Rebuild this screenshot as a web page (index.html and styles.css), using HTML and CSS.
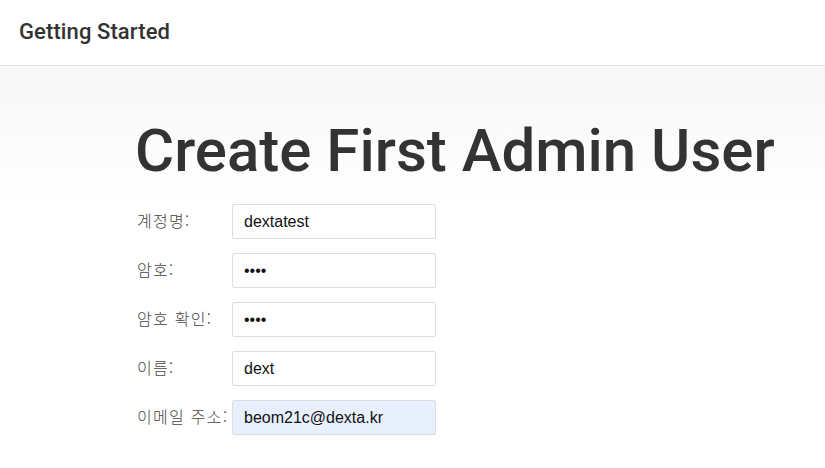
FILE: index.html
```html
<!DOCTYPE html>
<html lang="ko">
<head>
<meta charset="utf-8">
<title>Getting Started</title>
<link rel="stylesheet" href="styles.css">
</head>
<body>
<header class="top">
  <div class="brand">Getting Started</div>
</header>
<main class="page">
  <h1 class="title">Create First Admin User</h1>
  <form class="form">
    <label class="lbl" for="u">계정명:</label>
    <input class="field" id="u" type="text" value="dextatest">
    <label class="lbl" for="p">암호:</label>
    <input class="field pw" id="p" type="password" value="test">
    <label class="lbl" for="p2">암호 확인:</label>
    <input class="field pw" id="p2" type="password" value="test">
    <label class="lbl" for="n">이름:</label>
    <input class="field" id="n" type="text" value="dext">
    <label class="lbl" for="e">이메일 주소:</label>
    <input class="field auto" id="e" type="text" value="beom21c@dexta.kr">
  </form>
</main>
</body>
</html>
```

FILE: styles.css
```css
html, body {
  margin: 0;
  padding: 0;
  height: 100%;
  overflow: hidden;
}
body {
  font-family: Roboto, "Liberation Sans", Arial, sans-serif;
  color: #333;
  background: #fff;
}
.top {
  height: 65px;
  border-bottom: 1px solid #e2e2e2;
  display: flex;
  align-items: center;
  padding-left: 19px;
}
.brand {
  font-size: 22px;
  font-weight: 500;
  letter-spacing: 0.1px;
  color: #333;
  margin-top: -3px;
}
.page {
  background: linear-gradient(to bottom, #f7f7f7 0px, #ffffff 140px);
  padding: 45px 0 0 135px;
  height: calc(100% - 66px);
  box-sizing: border-box;
}
.title {
  margin: 0;
  font-family: Roboto, sans-serif;
  font-weight: 500;
  font-size: 60px;
  line-height: 80px;
  color: #333;
}
.form {
  display: grid;
  grid-template-columns: 97px 204px;
  row-gap: 14px;
  margin-top: 13px;
}
.lbl {
  font-family: "Noto Sans CJK KR", sans-serif;
  font-size: 16px;
  font-weight: 300;
  color: #444;
  padding-top: 5px;
  padding-left: 2px;
  letter-spacing: 1.3px;
  white-space: nowrap;
  line-height: 22px;
}
.field {
  width: 204px;
  height: 35px;
  box-sizing: border-box;
  border: 1px solid #ddd;
  border-radius: 2px;
  padding: 0 11px;
  font-family: "Liberation Sans", Arial, sans-serif;
  font-size: 16px;
  color: #111;
  background: #fff;
  outline: none;
  margin: 0;
}
.field.auto {
  background: #e8f0fe;
}
```
